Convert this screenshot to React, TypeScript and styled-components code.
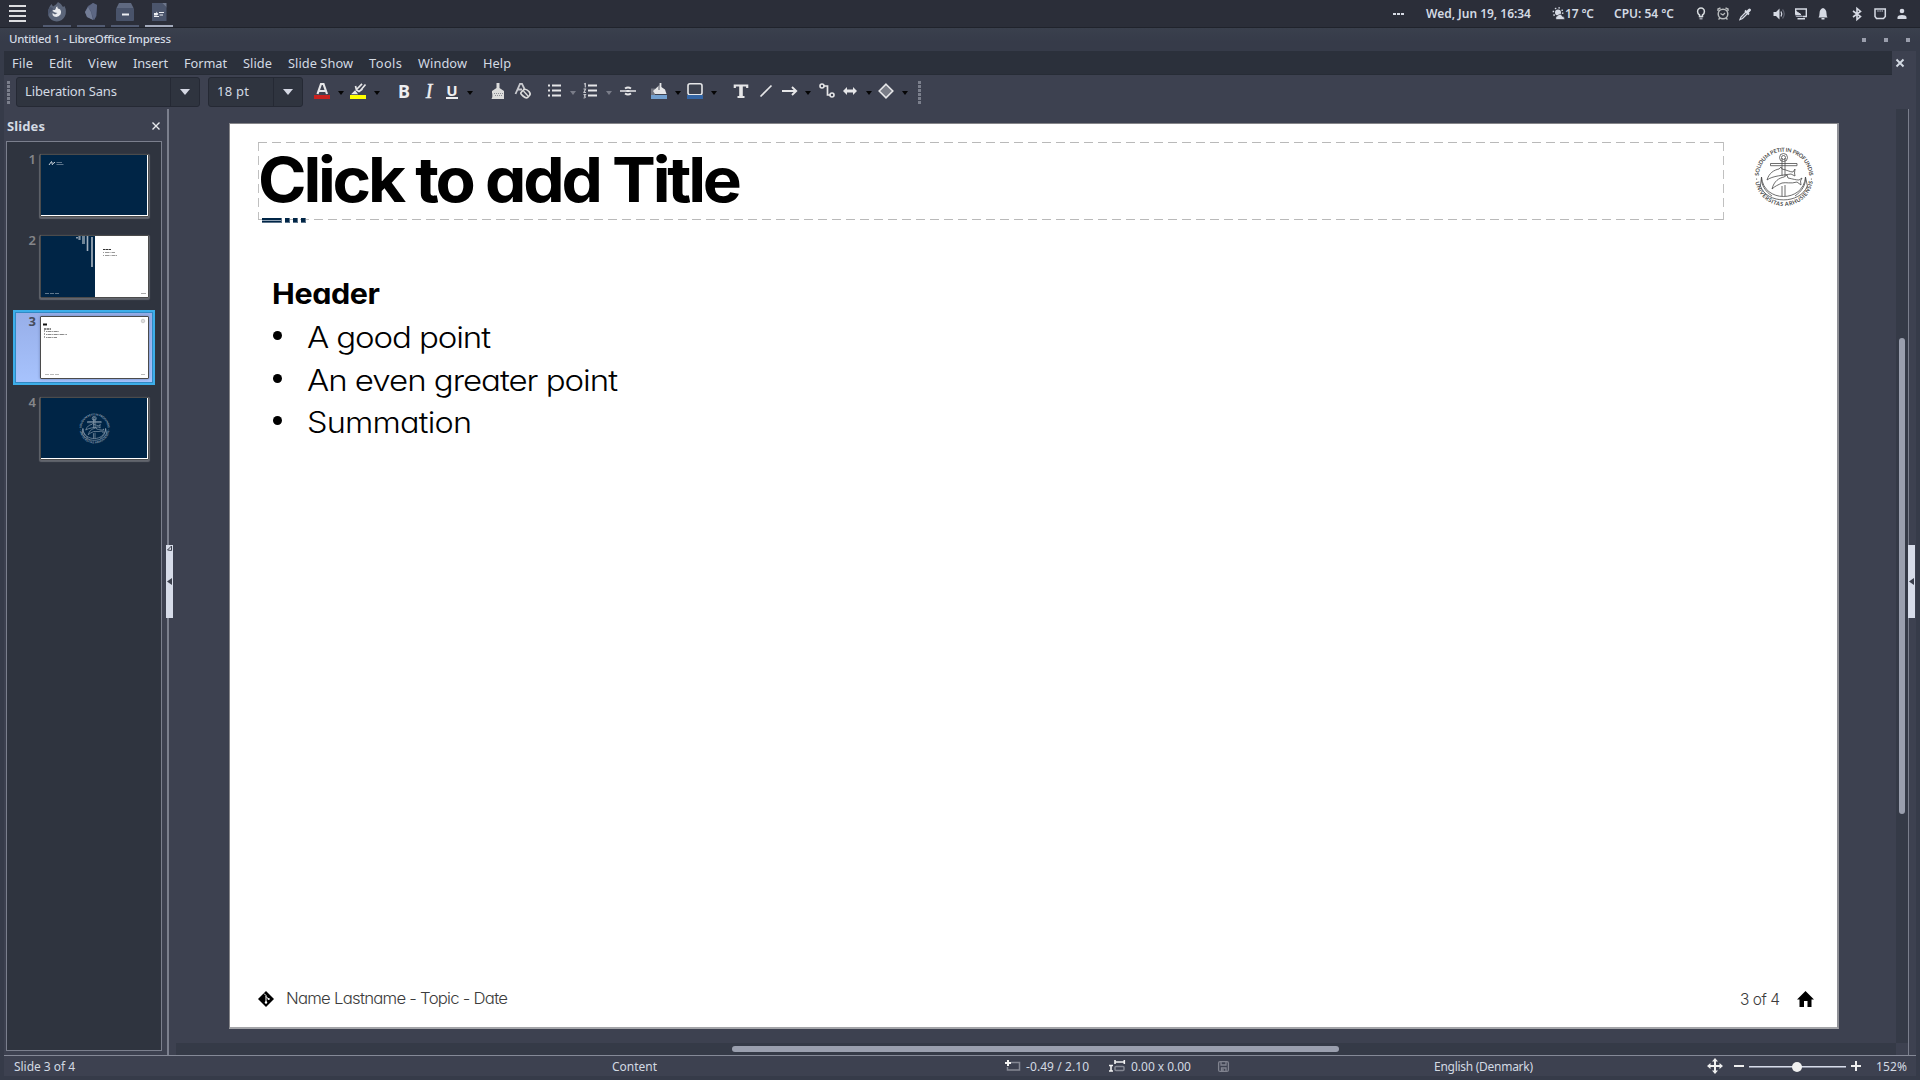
import React, { useLayoutEffect, useRef, useState } from "react";
import styled, { createGlobalStyle, css } from "styled-components";

const c = {
  panel: "#2b2e39",
  frame: "#363b49",
  menu: "#2b303b",
  body: "#3d4150",
  pane: "#2f343f",
  edge: "#252a35",
  line: "#7b7f8d",
  thumb: "#9a9fae",
  text: "#d3dae3",
  icon: "#e6e6e8",
  navy: "#002546",
};

const Global = createGlobalStyle`
  * { box-sizing: border-box; }
  html, body { margin: 0; background: ${c.frame}; overflow: hidden; }
  body { font-family: "Noto Sans", "Open Sans", sans-serif; color: ${c.text}; }
  svg { display: block; flex: none; overflow: visible; }
`;

/* ---------- text that is tracked to a given measure ---------- */

const Measure = styled.span<{ $w: number; $ml?: number; $k?: number }>`
  display: block;
  flex: none;
  width: ${(p) => p.$w}px;
  margin-left: ${(p) => p.$ml ?? 0}px;
  white-space: pre;
  span {
    display: inline-block;
    transform-origin: 0 50%;
    ${(p) => p.$k && css`transform: scaleX(${p.$k});`}
  }
`;

function Fit({ w, ml, k, children }: { w: number; ml?: number; k?: number; children: string }) {
  const ref = useRef<HTMLSpanElement>(null);
  const [track, setTrack] = useState(0);
  useLayoutEffect(() => {
    if (ref.current) {
      const natural = ref.current.getBoundingClientRect().width;
      setTrack((w - natural) / (k ?? 1) / (children.length - 1 || 1));
    }
  }, [w, k, children]);
  return (
    <Measure $w={w} $ml={ml} $k={k}>
      <span ref={ref} style={{ letterSpacing: track }}>
        {children}
      </span>
    </Measure>
  );
}

/* ---------- desktop panel ---------- */

const Screen = styled.div`
  width: 1920px;
  height: 1080px;
  display: flex;
  flex-direction: column;
`;

const Panel = styled.header`
  height: 28px;
  flex: none;
  display: flex;
  align-items: center;
  background: ${c.panel};
  border-bottom: 1px solid #20232c;
  font-size: 12px;
  font-weight: 600;
  line-height: 26px;
`;

const Burger = styled.div`
  width: 17px;
  margin-left: 9px;
  display: grid;
  gap: 3px;
  i { height: 2px; background: #dcdde0; }
`;

const Apps = styled.nav`
  display: flex;
  gap: 6px;
  margin-left: 17px;
  align-self: stretch;
`;

const App_ = styled.div<{ $active?: boolean }>`
  width: 28px;
  height: 27px;
  padding-top: 2px;
  display: flex;
  justify-content: center;
  border-bottom: 2px solid ${(p) => (p.$active ? "#a3aabc" : "#525b72")};
`;

const Tray = styled.div`
  display: flex;
  align-items: center;
  margin-left: auto;
  width: 528px;
  height: 26px;
`;

const Slot = styled.div<{ $ml?: number; $w?: number; $mt?: number }>`
  width: ${(p) => p.$w ?? 16}px;
  margin-left: ${(p) => p.$ml ?? 0}px;
  margin-top: ${(p) => p.$mt ?? 0}px;
  flex: none;
  display: flex;
  justify-content: center;
`;

/* ---------- window frame ---------- */

const TitleBar = styled.div`
  height: 23px;
  flex: none;
  display: flex;
  align-items: center;
  padding: 0 10px 1px 9px;
  background: linear-gradient(#3a404d, ${c.frame} 60%);
  font-size: 11.5px;
  font-weight: 500;
  line-height: 20px;
`;

const WinButtons = styled.div`
  margin: 2px 0 0 auto;
  display: flex;
  gap: 18px;
  i { width: 4px; height: 4px; background: #9a9eac; }
`;

const Win = styled.div`
  flex: 1;
  min-height: 0;
  margin: 0 4px 4px;
  display: flex;
  flex-direction: column;
  background: ${c.body};
`;

const MenuRow = styled.div`
  display: flex;
  height: 24px;
  flex: none;
`;

const MenuBar = styled.nav`
  width: 1888px;
  padding-left: 8px;
  display: flex;
  gap: 16px;
  background: ${c.menu};
  border-bottom: 1px solid #272c36;
  font-size: 12.8px;
  line-height: 25px;
`;

const CloseDoc = styled.div`
  flex: 1;
  display: flex;
  align-items: center;
  padding-left: 4px;
`;

/* ---------- toolbar ---------- */

const ToolBar = styled.div`
  height: 34px;
  flex: none;
  display: flex;
  align-items: center;
  padding: 0 0 2px 3px;
`;

const Grip = styled.div<{ $ml?: number }>`
  width: 3px;
  height: 23px;
  margin: 2px 0 0 ${(p) => p.$ml ?? 0}px;
  background: repeating-linear-gradient(#7b7f8c 0 3px, transparent 3px 4px);
`;

const Combo = styled.div<{ $w: number; $ml: number }>`
  width: ${(p) => p.$w}px;
  height: 30px;
  margin: 2px 0 0 ${(p) => p.$ml}px;
  display: flex;
  border: 1px solid #252934;
  border-radius: 3px;
  background: ${c.pane};
  font-size: 13px;
  line-height: 27px;
`;

const ComboText = styled.div`
  flex: 1;
  padding-left: 8px;
`;

const ComboButton = styled.div`
  width: 29px;
  border-left: 1px solid #252934;
  display: flex;
  align-items: center;
  justify-content: center;
`;

const Caret = styled.i<{ $color?: string; $ml?: number; $s?: number }>`
  flex: none;
  margin-left: ${(p) => p.$ml ?? 0}px;
  ${(p) => p.$ml !== undefined && css`margin-top: 4px;`}
  border: ${(p) => p.$s ?? 3}px solid transparent;
  border-top: ${(p) => (p.$s ?? 3) + 1}px solid ${(p) => p.$color ?? "#050505"};
  border-bottom: 0;
`;

const Letter = styled.span<{ $ml: number; $w: number; $kind?: "b" | "i" | "u" }>`
  width: ${(p) => p.$w}px;
  margin-left: ${(p) => p.$ml}px;
  flex: none;
  text-align: center;
  font-size: 18px;
  line-height: 18px;
  height: 18px;
  font-weight: 700;
  color: #eeeef0;
  ${(p) => p.$kind === "i" && css`font-family: "Liberation Serif", serif; font-style: italic; font-weight: 400; font-size: 20px; -webkit-text-stroke: 0.4px #eeeef0;`}
  ${(p) => p.$kind === "u" && css`font-size: 15px; line-height: 14px; height: 16px; border-bottom: 2px solid #eeeef0;`}
`;

/* ---------- main area ---------- */

const Main = styled.div`
  flex: 1;
  min-height: 0;
  display: flex;
`;

const SlidesPane = styled.aside`
  width: 162px;
  flex: none;
  padding: 0 4px 4px 2px;
  display: flex;
  flex-direction: column;
`;

const PaneHead = styled.div`
  height: 32px;
  flex: none;
  padding: 1px 2px 0 1px;
  display: flex;
  align-items: center;
  justify-content: space-between;
  font-size: 13px;
  font-weight: 700;
`;

const SlideList = styled.div`
  flex: 1;
  border: 1px solid ${c.line};
  background: ${c.pane};
  padding: 6px 6px 0;
  display: flex;
  flex-direction: column;
  gap: 6px;
`;

const SlideItem = styled.div<{ $on?: boolean }>`
  width: 142px;
  height: 75px;
  padding-left: 13px;
  display: flex;
  align-items: flex-start;
  gap: 4px;
  ${(p) =>
    p.$on
      ? css`
          border: 2px solid #3daee9;
          box-shadow: inset 0 0 0 1px #3189c4;
          background: linear-gradient(#97aee8, #a7c3fd);
          padding: 4px 0 0 11px;
        `
      : css`padding-top: 6px;`}
`;

const Num = styled.span<{ $on?: boolean }>`
  width: 10px;
  margin-top: -1px;
  text-align: right;
  font-size: 13px;
  font-weight: ${(p) => (p.$on ? 700 : 600)};
  line-height: 12px;
  color: ${(p) => (p.$on ? "#474d5c" : "#85868a")};
`;

const Thumb = styled.div<{ $on?: boolean }>`
  width: 109px;
  height: 63px;
  border: 1px solid #4b4b4b;
  background: #fff;
  box-shadow: ${(p) => (p.$on ? "0 0 3px #7083b5" : "0 1px 1px 1px #62656d")};
  border-radius: 1px;
`;

const Splitter = styled.div`
  width: 7px;
  flex: none;
  display: flex;
  flex-direction: column;
`;

const Bar = styled.div<{ $h?: number }>`
  width: 2px;
  margin-left: 1px;
  ${(p) => (p.$h ? css`height: ${p.$h}px;` : css`flex: 1;`)}
  background: ${c.line};
`;

const Handle = styled.div`
  width: 7px;
  height: 73px;
  flex: none;
  background: #d7dce9;
  display: flex;
  align-items: center;
  justify-content: center;
`;

const SplitHandle = styled(Handle)`
  flex-direction: column;
  justify-content: flex-start;
  gap: 26px;
`;

const Work = styled.main`
  width: 1723px;
  flex: none;
  padding-left: 3px;
  display: flex;
  flex-direction: column;
`;

const Canvas = styled.div`
  flex: 1;
  min-height: 0;
  padding: 14px 0 0 53px;
`;

const Page = styled.article`
  width: 1610px;
  height: 906px;
  border: 1px solid #858589;
  border-right: 2px solid #8f9096;
  border-bottom: 2px solid #a3a4a8;
  background: #fff;
  color: #000;
  font-family: Inter, sans-serif;
  font-feature-settings: "cv11";
  display: flex;
  flex-direction: column;
  padding: 18px 23px 18px 28px;
`;

const PageHead = styled.div`
  display: flex;
  justify-content: space-between;
  align-items: flex-start;
  height: 84px;
`;

const TitleBox = styled.div`
  width: 1466px;
  height: 78px;
  display: grid;
  grid-template: 77px 1px / 1465px 1px;
  background:
    repeating-linear-gradient(90deg, #b9b9b9 0 9px, transparent 9px 14px) 0 0 / 100% 1px no-repeat,
    repeating-linear-gradient(90deg, #b9b9b9 0 9px, transparent 9px 14px) 0 100% / 100% 1px no-repeat,
    repeating-linear-gradient(#c0c0c0 0 9px, transparent 9px 14px) 0 0 / 1px 100% no-repeat,
    repeating-linear-gradient(#c0c0c0 0 9px, transparent 9px 14px) 100% 0 / 1px 100% no-repeat;
  font-size: 62px;
  font-weight: 700;
  line-height: 75px;
`;

const Accent = styled.div`
  display: flex;
  gap: 3px;
  margin: -8px 0 0 4px;
  i { width: 5px; height: 5px; background: ${c.navy}; border-bottom: 1px solid #5c7389; border-right: 1px solid #5c7389; }
  i:first-child { width: 20px; background: linear-gradient(${c.navy} 2px, #91a3b5 2px 3px, ${c.navy} 3px); }
`;

const Content = styled.section`
  flex: 1;
  padding: 49px 0 0 14px;
  font-size: 29.5px;
  font-weight: 300;
`;

const Heading = styled.h2`
  margin: 0;
  height: 44px;
  font-size: 28.5px;
  font-weight: 700;
  line-height: 43px;
`;

const Point = styled.div`
  display: flex;
  align-items: center;
  height: 42.5px;
  line-height: 42.5px;
  i { width: 9px; height: 9px; border-radius: 50%; background: #000; margin: 0 25px 3px 1px; }
`;

const PageFoot = styled.footer`
  display: flex;
  align-items: center;
  height: 20px;
  font-size: 15.5px;
  font-weight: 300;
  line-height: 20px;
  color: #3c3c3c;
`;

const PageNumber = styled.div`
  margin: 2px 0 0 auto;
`;

const HTrack = styled.div`
  height: 12px;
  flex: none;
  padding: 3px 0 0 556px;
  background: #353a47;
  div { width: 607px; height: 6px; border-radius: 3px; background: ${c.thumb}; }
`;

const VTrack = styled.div`
  width: 12px;
  height: 934px;
  flex: none;
  padding: 229px 0 0 3px;
  background: #353a47;
  div { width: 6px; height: 476px; border-radius: 3px; background: ${c.thumb}; }
`;

const Side = styled.div`
  flex: 1;
  padding-top: 436px;
  border-left: 1px solid ${c.line};
  div { margin-left: -1px; }
`;

const Status = styled.footer`
  height: 21px;
  flex: none;
  display: flex;
  align-items: center;
  padding-left: 10px;
  border-top: 1px solid #858997;
  font-size: 12px;
  line-height: 19px;
`;

const Zoomer = styled.div`
  width: 97px;
  height: 12px;
  margin: 1px 0 0 5px;
  display: flex;
  align-items: center;
  justify-content: center;
  background: linear-gradient(transparent 5px, #d7dce9 5px 6px, #8d92a2 6px 7px, transparent 7px);
  i { width: 10px; height: 10px; margin-right: 1px; border-radius: 50%; background: #f1f1f1; }
`;

/* ---------- drawings ---------- */

const Seal = ({ size, color, id, bold }: { size: number; color: string; id: string; bold?: boolean }) => (
  <svg width={size} height={size} viewBox="0 0 60 60" fill="none" stroke={color} strokeWidth={bold ? 1.3 : 0.8}>
    <defs>
      <path id={id + "t"} d="M4.700 30 A25.3 25.3 0 0 1 55.300 30" />
      <path id={id + "b"} d="M0.900 30 A29.1 29.1 0 0 0 59.1 30" />
    </defs>
    <g fill={color} stroke="none" fontFamily="Lato, sans-serif" fontWeight={bold ? 900 : 700} fontSize="5.5">
      <text>
        <textPath href={`#${id}t`} startOffset="1.2" textLength="76.5">SOLIDUM PETIT IN PROFUNDIS</textPath>
      </text>
      <text>
        <textPath href={`#${id}b`} startOffset="5" textLength="82">UNIVERSITAS ARHUSIENSIS</textPath>
      </text>
      <circle cx="2.600" cy="32" r=".6" />
      <circle cx="57.400" cy="32" r=".6" />
    </g>
    <circle cx="29.5" cy="10.5" r="4" />
    <circle cx="29.5" cy="10.5" r="2" />
    <path d="M16.5 16.5H43V18.7H16.5Z" />
    <path d="M28 11V29M31 11V29M28 39V49M31 38V49" />
    <path d="M7.5 30C9.5 56 49.5 56 51.5 30L53.4 39C46 57.5 13 57.5 6.4 39Z" />
    <path d="M7.5 30C7 38 11 44 18 49M51.5 30C52 38 48 44 41 49" />
    <path d="M13 33C15 26 20 23 25 22L27 20L28 22C33 23 36 25 39 25L41 22L40.500 26L41 29L37 27C30 28 18 29 13 33Z" />
    <path d="M18 42C20 34 25 31 30 30L33 28L34 31C39 32 42 33 45 33L48 31L46.500 34L47 38L43 35C37 37 32 35 28 36C24 38 21 39 18 42Z" />
  </svg>
);

const X = ({ s, w, color = c.text }: { s: number; w: number; color?: string }) => (
  <svg width={s} height={s} viewBox="0 0 8 8" stroke={color} strokeWidth={w}>
    <path d="M.5.5 7.500 7.500M7.500.5.5 7.500" />
  </svg>
);

const Svg16 = ({ children }: { children: React.ReactNode }) => (
  <svg width="16" height="16" viewBox="0 0 16 16" fill="none" stroke={c.icon} strokeWidth="1.6">
    {children}
  </svg>
);

const Thumb1 = () => (
  <svg width="107" height="61">
    <path d="M0 0H106V60H0Z" fill={c.navy} />
    <path d="M8 10 10.500 6.500 11.500 10M12 7.500Q12 10 14 7M14.500 9" stroke="#cbd3da" fill="none" />
    <path d="M15.500 7.500H21M15.500 9.500H22.500" stroke="#5b738a" />
  </svg>
);

const Thumb2 = () => (
  <svg width="107" height="61">
    <path d="M0 0H54V61H0Z" fill={c.navy} />
    <path d="M36 1V2.500M51 1V31" stroke="#e4e8ec" strokeWidth="1.200" />
    <path d="M46.500 0V15" stroke="#a3b0bd" strokeWidth="1.600" />
    <path d="M42.500 0V8" stroke="#6f8496" strokeWidth="3" />
    <path d="M38.500 0V4" stroke="#8394a4" strokeWidth="2.200" />
    <path d="M62 13.500H70" stroke="#333" strokeDasharray="2.500 .4" />
    <path d="M62 16.500H74M62 19.500H77" stroke="#999" strokeDasharray="1 1 4 .5" />
    <path d="M4 57.500H19" stroke="#60788d" strokeDasharray="4 1" />
    <path d="M100 57.500H105" stroke="#aaa" />
  </svg>
);

const Thumb3 = () => (
  <svg width="107" height="61">
    <path d="M2 7.500H6" stroke="#111" strokeWidth="2" />
    <path d="M3 12H10" stroke="#111" strokeDasharray="2.500 .5" />
    <path d="M5 14.500H18M5 17.500H26M5 20.500H16" stroke="#8a8a8a" strokeDasharray="1 .5 4 .7" />
    <path d="M3 14H4M3 17H4M3 20H4" stroke="#444" />
    <circle cx="102" cy="4" r="1.800" stroke="#bbb" fill="#ddd" strokeWidth=".7" />
    <path d="M4 57.500H19M100 57.500H105" stroke="#bbb" strokeDasharray="4 1" />
  </svg>
);

const Thumb4Box = styled.div`
  width: 106px;
  height: 60px;
  background: ${c.navy};
  display: flex;
  align-items: center;
  justify-content: center;
`;

const Firefox = () => (
  <svg width="20" height="20" viewBox="0 0 20 20">
    <path d="M3 4 4.500 2 6 4.500 9 2.500 11 0Q15 2 16 5L17.500 4Q20 9 18 14A9 9 0 0 1 1.500 14Q0 9 3 4Z" fill="#5b6579" />
    <path d="M3 5 6 6 5 9Q2 10 1.500 14Q0 9 3 5Z" fill="#49536a" />
    <path d="M5.500 9Q5.500 7.500 8 8L9 6Q8.500 4.500 10.500 4.500Q10 6.500 12.500 7Q15 9 13.500 12.500Q11 16 7 14.500Q5 13 5.500 11L8 12.500 10.500 11 8 10.500Z" fill="#e9ebee" />
  </svg>
);
const Crystal = () => (
  <svg width="14" height="20" viewBox="0 0 14 20">
    <path d="M9 1 13 3 12.500 14 10 18 3 15 1 10 4 4Z" fill="#4d5670" />
    <path d="M9 1 4 5 7 9 10 18 12 14 13 3Z" fill="#5d6783" />
    <path d="M4 5 1 10 3 15 9 18 7 10Z" fill="#737d96" />
  </svg>
);
const Drawer = () => (
  <svg width="18" height="20" viewBox="0 0 18 20">
    <path d="M3 1H15L17.500 6H.5Z" fill="#5f6980" />
    <rect y="6" width="18" height="13" rx="1" fill="#49536a" />
    <rect x="6" y="11.500" width="7" height="2" fill="#eceef2" />
  </svg>
);
const ImpressIcon = () => (
  <svg width="16" height="20" viewBox="0 0 16 20">
    <path d="M1 1H11L15.500 5.500V19H1Z" fill="#4b556c" />
    <path d="M11 1 15.500 1V5.500Z" fill="#6d768b" />
    <path d="M3 11H6V13.500H3ZM3 14H8V15H3ZM8 10H13V11H8ZM8.500 12.500H12V13.500H8.500ZM5 9.500 7.500 12 6 13.500Z" fill="#eef0f4" />
  </svg>
);

const t = "#d6dae4";

function TopPanel() {
  return (
    <Panel>
      <Burger><i /><i /><i /><i /></Burger>
      <Apps>
        <App_><Firefox /></App_>
        <App_><Crystal /></App_>
        <App_><Drawer /></App_>
        <App_ $active><ImpressIcon /></App_>
      </Apps>
      <Tray>
        <Slot $w={12}>
          <svg width="11" height="2" fill={t}><path d="M0 0H3V2H0ZM4 0H7V2H4ZM8 0H11V2H8Z" /></svg>
        </Slot>
        <Fit ml={22} w={105}>Wed, Jun 19, 16:34</Fit>
        <Slot $w={13} $ml={21}>
          <svg width="13" height="13" viewBox="0 0 13 13">
            <circle cx="6" cy="5.500" r="4.700" fill="none" stroke={t} strokeWidth="1.500" strokeDasharray="1.400 2.280" />
            <circle cx="6" cy="5.500" r="3" fill={t} />
            <path d="M4.500 12.500A2 2 0 0 1 5.500 9Q6.500 6.500 9 7.500Q10 8 10.200 9.200Q13 9.500 12.500 12.500Z" fill={t} stroke={c.panel} strokeWidth=".6" />
          </svg>
        </Slot>
        <Fit w={29}>17 °C</Fit>
        <Fit ml={20} w={60}>CPU: 54 °C</Fit>
        <Slot $ml={19}>
          <Svg16>
            <path d="M6.500 10.500V9Q4.600 7.800 4.600 5.500A3.400 3.400 0 0 1 11.400 5.500Q11.400 7.800 9.500 9V10.500Z" stroke="#d9dde0" strokeWidth="1.500" />
            <path d="M6.500 11.500H9.500V13.500H6.500Z" fill="#9b9ea8" stroke="none" />
          </Svg16>
        </Slot>
        <Slot $ml={6}>
          <Svg16>
            <circle cx="8" cy="8" r="4.800" stroke="#b9bcbe" strokeWidth="1.500" />
            <path d="M5.500 7.500 8 9 10 7" stroke="#b9bcbe" strokeWidth="1.200" />
            <path d="M3 5V3L5.500 2M13 5V3L10.500 2M3.500 13.500 5 12M12.500 13.500 11 12" stroke="#b9bcbe" strokeWidth="1.400" />
          </Svg16>
        </Slot>
        <Slot $ml={6}>
          <Svg16>
            <path d="M3 13.500 4 11 9 6 10.500 7.500 5.500 12.500Z" stroke={t} strokeWidth="1.300" />
            <path d="M8 4.500 12 8.500" stroke={t} strokeWidth="1.800" />
            <path d="M10.500 6 12.500 4" stroke={t} strokeWidth="3" strokeLinecap="round" />
          </Svg16>
        </Slot>
        <Slot $ml={18}>
          <Svg16>
            <path d="M2.500 6H5L8.500 2.500V13.500L5 10H2.500Z" fill={t} stroke="none" />
            <path d="M10 5.500Q11.500 8 10 10.500" stroke={t} strokeWidth="1.300" />
            <path d="M11.500 3.500Q15 8 11.500 12.500" stroke="#5b5f6c" strokeWidth="1.300" />
          </Svg16>
        </Slot>
        <Slot $ml={6}>
          <Svg16>
            <path d="M2.700 5V3H13.300V10.500H10" stroke={t} strokeWidth="1.400" />
            <path d="M2.500 5 8 8.500H2.500Z" fill={t} stroke={t} strokeWidth="1" />
            <path d="M2 9.500H9L10.500 11H3.500Z" fill="#a8acba" stroke="none" />
            <path d="M4.500 12H12V13.500H4.500Z" fill={t} stroke="none" />
          </Svg16>
        </Slot>
        <Slot $ml={6}>
          <Svg16>
            <path d="M8 2Q11.500 3 11.500 7.500Q11.500 10 12.500 11.500H3.500Q4.500 10 4.500 7.500Q4.500 3 8 2Z" fill={t} stroke="none" />
            <path d="M6.500 12H9.500V13.500H6.500Z" fill={t} stroke="none" />
          </Svg16>
        </Slot>
        <Slot $ml={18}>
          <Svg16><path d="M4 5 11.500 10.500 8 13.500V2.500L11.500 5.500 4 11" stroke={t} strokeWidth="1.600" /></Svg16>
        </Slot>
        <Slot $ml={7}>
          <Svg16>
            <path d="M3 3H13.300V10.500L11.500 12.500H4.500L3 10.500Z" stroke={t} strokeWidth="1.500" />
            <path d="M6 3.500V6M8.100 3.500V6M10.200 3.500V6" stroke="#a0a4b0" strokeWidth="1" />
          </Svg16>
        </Slot>
        <Slot $ml={6}>
          <Svg16>
            <circle cx="8" cy="5" r="2.300" fill={t} stroke="none" />
            <path d="M3.500 13V11Q4 9 8 9Q12 9 12.500 11V13Z" fill={t} stroke="none" />
          </Svg16>
        </Slot>
      </Tray>
    </Panel>
  );
}

const menus: [string, number][] = [
  ["File", 21], ["Edit", 23], ["View", 29], ["Insert", 35], ["Format", 43],
  ["Slide", 29], ["Slide Show", 65], ["Tools", 33], ["Window", 49], ["Help", 28],
];

function Tools() {
  return (
    <ToolBar>
      <Grip />
      <Combo $w={184} $ml={6}>
        <ComboText><Fit w={92}>Liberation Sans</Fit></ComboText>
        <ComboButton><Caret $s={5} $color="#d5d8e4" /></ComboButton>
      </Combo>
      <Combo $w={95} $ml={8}>
        <ComboText><Fit w={32}>18 pt</Fit></ComboText>
        <ComboButton><Caret $s={5} $color="#d5d8e4" /></ComboButton>
      </Combo>
      <Slot $ml={11}>
        <Svg16>
          <path d="M3.500 11 7 1H9.500L13 11M5 8H11" strokeWidth="2.200" />
          <path d="M0 12H16V16H0Z" fill="#c9211e" stroke="none" />
        </Svg16>
      </Slot>
      <Caret $ml={8} />
      <Slot $ml={6}>
        <Svg16>
          <path d="M3 10.500H6.500L5 8.500Z" fill={c.icon} />
          <path d="M5.500 3 6.500 7 9 8.500 12.500 6M7 6 12 .8M10 8 15.500 1.500" strokeWidth="1.700" />
          <path d="M0 12H16V16H0Z" fill="#ffff00" stroke="none" />
        </Svg16>
      </Slot>
      <Caret $ml={8} />
      <Letter $ml={17} $w={14} $kind="b">B</Letter>
      <Letter $ml={11} $w={14} $kind="i">I</Letter>
      <Letter $ml={10} $w={12} $kind="u">U</Letter>
      <Caret $ml={9} />
      <Slot $ml={17}>
        <Svg16>
          <path d="M6.500 0H9.500V5L14 8V10H2V8L6.500 5Z" fill="#dcdcdc" stroke="none" />
          <path d="M2 9H14V16H1.500Q3 14 2 9Z" fill="#dcdcdc" stroke="none" />
          <path d="M4 10.500H13M5 12.500H13" stroke="#8a8c94" strokeWidth="1" strokeDasharray="1 1" />
        </Svg16>
      </Slot>
      <Slot $ml={9}>
        <Svg16>
          <path d="M.5 11 5 .8H7L9.500 6M3 6.500H7" stroke="#c9cacf" strokeWidth="1.800" />
          <path d="M6 9.500 9 6.500Q11 5.500 14 8.500Q16 11 14.500 12.500L12.500 14.500Q11 15.500 8 13Q5 10.500 6 9.500Z" stroke="#dcdcdc" strokeWidth="1.700" />
          <path d="M8.500 8 13 13" stroke="#dcdcdc" strokeWidth="1.300" />
        </Svg16>
      </Slot>
      <Slot $ml={16}>
        <Svg16>
          <path d="M1 2.500H3M1 7.500H3M1 12.500H3" strokeWidth="2" />
          <path d="M5 2.500H14M5 7.500H14M5 12.500H14" strokeWidth="1.800" />
        </Svg16>
      </Slot>
      <Caret $ml={7} $color="#7a7d89" />
      <Slot $ml={6}>
        <Svg16>
          <path d="M6 2.500H15M6 7.500H15M6 12.500H15" strokeWidth="1.800" />
          <path d="M2 1 3.300.5V4.500M1.500 6H3.500L2 9.500H4M1.500 11.500H3.500L2.500 13Q4.500 15 1.500 15" stroke="#c6c7cc" strokeWidth="1.200" />
        </Svg16>
      </Slot>
      <Caret $ml={8} $color="#7a7d89" />
      <Slot $ml={8}>
        <Svg16>
          <path d="M0 8H16" strokeWidth="1.500" />
          <path d="M5 5.500Q8 3.500 11 5.500M5 10.500Q8 12.500 11 10.500M6.500 8H9.500" strokeWidth="1.900" />
        </Svg16>
      </Slot>
      <Slot $ml={15}>
        <Svg16>
          <path d="M0 5.500H4V12H0Z" fill="#747782" stroke="none" />
          <path d="M2 8 8 2.500 14 6.500 15.500 11H4Z" fill={c.icon} stroke="none" />
          <path d="M9.500 0V7.500" strokeWidth="1.800" />
          <path d="M8 3V7" stroke="#535665" strokeWidth="1" />
          <path d="M0 12H16V16H0Z" fill="#729fcf" stroke="none" />
        </Svg16>
      </Slot>
      <Caret $ml={8} />
      <Slot $ml={6}>
        <Svg16>
          <rect x="1" y=".8" width="14" height="11" rx="2" fill="#3b404d" strokeWidth="1.600" />
          <path d="M0 12H16V16H0Z" fill="#3465a4" stroke="none" />
        </Svg16>
      </Slot>
      <Caret $ml={8} />
      <Slot $ml={16}>
        <Svg16>
          <path d="M1.800 5V2.500H14.200V5" strokeWidth="2.200" />
          <path d="M8 2V13.500" strokeWidth="3.600" />
          <path d="M4.500 14H11.500" strokeWidth="2" />
        </Svg16>
      </Slot>
      <Slot $ml={9}><Svg16><path d="M2.500 13.500 13.500 2.500" strokeWidth="1.700" /></Svg16></Slot>
      <Slot $ml={8}><Svg16><path d="M0 8H14M10 4 14.200 8 10 12" strokeWidth="1.900" /></Svg16></Slot>
      <Caret $ml={7} />
      <Slot $ml={8}>
        <Svg16>
          <circle cx="3" cy="3" r="2" />
          <circle cx="13" cy="12" r="2" />
          <path d="M5 3H8.500V12H11" strokeWidth="1.700" />
        </Svg16>
      </Slot>
      <Slot $ml={7}>
        <Svg16><path d="M1 8 5 4V6.500H11V4L15 8 11 12V9.500H5V12Z" fill={c.icon} stroke="none" /></Svg16>
      </Slot>
      <Caret $ml={8} />
      <Slot $ml={6}>
        <Svg16><path d="M8 1.200 14.800 8 8 14.800 1.200 8Z" fill="#7a7d87" strokeWidth="1.600" /></Svg16>
      </Slot>
      <Caret $ml={8} />
      <Grip $ml={10} />
    </ToolBar>
  );
}

function Deck() {
  const thumbs = [
    <Thumb1 />,
    <Thumb2 />,
    <Thumb3 />,
    <Thumb4Box><Seal size={31} color="#8d9fb0" id="small" bold /></Thumb4Box>,
  ];
  return (
    <SlidesPane>
      <PaneHead>
        <Fit w={38}>Slides</Fit>
        <X s={8} w={1.4} color="#e8eaee" />
      </PaneHead>
      <SlideList>
        {thumbs.map((art, i) => (
          <SlideItem key={i} $on={i === 2}>
            <Num $on={i === 2}>{i + 1}</Num>
            <Thumb $on={i === 2}>{art}</Thumb>
          </SlideItem>
        ))}
      </SlideList>
    </SlidesPane>
  );
}

function Slide() {
  return (
    <Page>
      <PageHead>
        <TitleBox><Fit w={484} k={1.06}>Click to add Title</Fit></TitleBox>
        <Slot $w={60} $mt={5}><Seal size={60} color="#4a4a4a" id="seal" /></Slot>
      </PageHead>
      <Accent><i /><i /><i /><i /></Accent>
      <Content>
        <Heading><Fit w={108} k={1.07}>Header</Fit></Heading>
        <Point><i /><Fit w={184} k={1.12}>A good point</Fit></Point>
        <Point><i /><Fit w={311} k={1.12}>An even greater point</Fit></Point>
        <Point><i /><Fit w={165} k={1.1}>Summation</Fit></Point>
      </Content>
      <PageFoot>
        <svg width="16" height="16" viewBox="0 0 16 16">
          <path d="M8 0 16 8 8 16 0 8Z" fill="#000" />
          <path d="M6 2.500 8 4.500V11.500M8 5.500 10.500 8" stroke="#fff" strokeWidth="1" fill="none" />
          <circle cx="8" cy="11.500" r="1.200" fill="#fff" />
          <circle cx="10.700" cy="8" r="1.100" fill="#fff" />
        </svg>
        <Fit ml={12} w={222} k={1.08}>Name Lastname - Topic - Date</Fit>
        <PageNumber><Fit w={40}>3 of 4</Fit></PageNumber>
        <Slot $ml={17} $w={17}>
          <svg width="17" height="16" viewBox="0 0 17 16">
            <path d="M8.500 0 17 8.500H14.500V16H10.500V10H7V16H2.500V8.500H0Z" />
          </svg>
        </Slot>
      </PageFoot>
    </Page>
  );
}

function StatusBar() {
  return (
    <Status>
      <Fit w={61}>Slide 3 of 4</Fit>
      <Fit ml={537} w={45}>Content</Fit>
      <Slot $ml={348}>
        <svg width="16" height="12" viewBox="0 0 16 12" fill="none">
          <path d="M6 2.500H14.500V10H2.500V7" stroke="#858893" strokeWidth="1.500" />
          <path d="M0 3H6M3 0V6" stroke="#f2f2f2" strokeWidth="2" />
        </svg>
      </Slot>
      <Fit ml={5} w={63}>-0.49 / 2.10</Fit>
      <Slot $ml={20}>
        <svg width="16" height="12" viewBox="0 0 16 12" fill="none">
          <rect x="6" y="6.500" width="9" height="4" rx="1" stroke="#858893" strokeWidth="1.500" />
          <path d="M5.500 2H16M6 0V4M15.300 0V4M0 5.500H4M0 11H4M2 5.500V11" stroke="#f2f2f2" strokeWidth="1.600" />
        </svg>
      </Slot>
      <Fit ml={6} w={60}>0.00 x 0.00</Fit>
      <Slot $ml={27} $w={11}>
        <svg width="11" height="11" viewBox="0 0 11 11" fill="none" stroke="#80838f" strokeWidth="1.300">
          <rect x=".6" y=".6" width="9.800" height="9.800" rx="1.500" />
          <path d="M3 .5V4H8V.5M3.500 10.500V7H8V10.500M5 8V10" />
        </svg>
      </Slot>
      <Fit ml={205} w={99}>English (Denmark)</Fit>
      <Slot $ml={174}>
        <svg width="16" height="16" viewBox="0 0 16 16" fill="#f0f0f0">
          <path d="M8 0 11 3.500H9V7H12.500V5L16 8 12.500 11V9H9V12.500H11L8 16 5 12.500H7V9H3.500V11L0 8 3.500 5V7H7V3.500H5Z" />
        </svg>
      </Slot>
      <Slot $ml={11} $w={10}><svg width="10" height="2"><path d="M0 0H10V2H0Z" fill="#eee" /></svg></Slot>
      <Zoomer><i /></Zoomer>
      <Slot $ml={5} $w={10}><svg width="10" height="10"><path d="M0 5H10M5 0V10" stroke="#eee" strokeWidth="2" /></svg></Slot>
      <Fit ml={15} w={31}>152%</Fit>
    </Status>
  );
}

const LeftArrow = () => (
  <svg width="5" height="7"><path d="M0 3.500 5 0V7Z" fill="#3b3f4c" /></svg>
);

export default function App() {
  return (
    <>
      <Global />
      <Screen>
        <TopPanel />
        <TitleBar>
          <Fit w={162}>Untitled 1 - LibreOffice Impress</Fit>
          <WinButtons><i /><i /><i /></WinButtons>
        </TitleBar>
        <Win>
          <MenuRow>
            <MenuBar>
              {menus.map(([name, w]) => <Fit key={name} w={w}>{name}</Fit>)}
            </MenuBar>
            <CloseDoc><X s={8} w={1.9} /></CloseDoc>
          </MenuRow>
          <Tools />
          <Main>
            <Deck />
            <Splitter>
              <Bar />
              <SplitHandle>
                <svg width="5" height="7" fill="none" stroke="#3b3f4c"><path d="M.5 5 4.500 1V5.500Z" /></svg>
                <LeftArrow />
              </SplitHandle>
              <Bar $h={437} />
            </Splitter>
            <Work>
              <Canvas><Slide /></Canvas>
              <HTrack><div /></HTrack>
            </Work>
            <VTrack><div /></VTrack>
            <Side><Handle><LeftArrow /></Handle></Side>
          </Main>
          <StatusBar />
        </Win>
      </Screen>
    </>
  );
}
